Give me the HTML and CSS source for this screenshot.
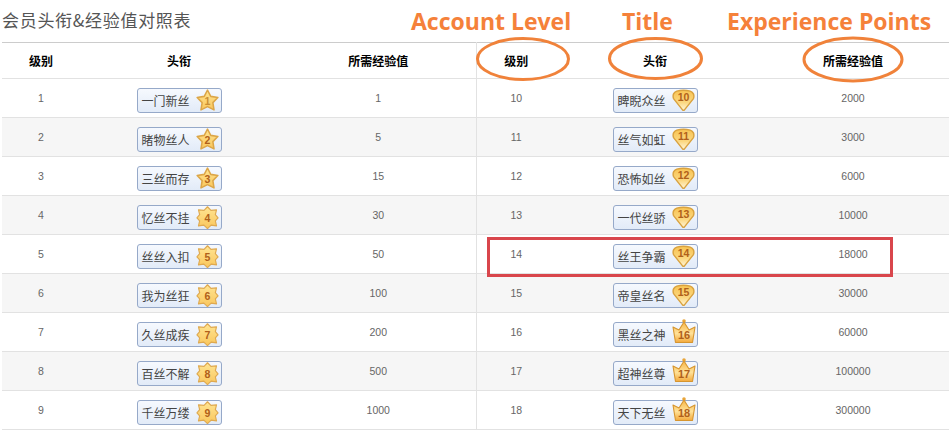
FILE: index.html
```html
<!DOCTYPE html>
<html lang="zh">
<head>
<meta charset="utf-8">
<title>会员头衔&amp;经验值对照表</title>
<link rel="stylesheet" href="styles.css">
</head>
<body>
<svg class="defs" aria-hidden="true">
  <defs>
    <linearGradient id="gold" x1="0" y1="0" x2="0" y2="1">
      <stop offset="0" stop-color="#ffe593"/>
      <stop offset="1" stop-color="#f9c65c"/>
    </linearGradient>
    <linearGradient id="gem" x1="0" y1="0" x2="0" y2="1">
      <stop offset="0" stop-color="#f8c453"/>
      <stop offset="0.6" stop-color="#fbd77f"/>
      <stop offset="1" stop-color="#fff6da"/>
    </linearGradient>
    <linearGradient id="crown" x1="0" y1="0" x2="0" y2="1">
      <stop offset="0" stop-color="#f7b548"/>
      <stop offset="0.55" stop-color="#ffe29a"/>
      <stop offset="1" stop-color="#f3a93c"/>
    </linearGradient>
    <symbol id="star" viewBox="0 0 24 24">
      <path d="M12 1.2 L15.4 7.7 L22.8 8.9 L17.6 14.2 L18.8 21.8 L12 18.4 L5.2 21.8 L6.4 14.2 L1.2 8.9 L8.6 7.7 Z" fill="url(#gold)" stroke="#dca648" stroke-width="1.6" stroke-linejoin="round"/>
    </symbol>
    <symbol id="spike" viewBox="0 0 24 24">
      <path d="M12 0.8 L15.6 4.6 L21.4 4 L20.2 9 L23 12.4 L20.2 15.6 L21.4 20.8 L15.8 20 L12 23.6 L8.2 20 L2.6 20.8 L3.8 15.6 L1 12.4 L3.8 9 L2.6 4 L8.4 4.6 Z" fill="url(#gold)" stroke="#dfa950" stroke-width="1.2" stroke-linejoin="round"/>
    </symbol>
    <symbol id="gem-shape" viewBox="0 0 24 24">
      <path d="M5 2.2 Q12 0.4 19 2.2 C22.2 3.2 23.6 6.4 22.4 10 L13 21.8 Q12 22.8 11 21.8 L1.6 10 C0.4 6.4 1.8 3.2 5 2.2 Z" fill="url(#gem)" stroke="#d9a23f" stroke-width="1.5" stroke-linejoin="round"/>
    </symbol>
    <symbol id="crown-shape" viewBox="0 0 24 25">
      <circle cx="12" cy="2" r="1.8" fill="#e9a63a"/>
      <path d="M1 8 L7 11 L12 3 L17 11 L23 8 L20.5 23.5 L3.5 23.5 Z" fill="url(#crown)" stroke="#d6952f" stroke-width="1.1" stroke-linejoin="round"/>
    </symbol>
  </defs>
</svg>

<h1 class="page-title">会员头衔&amp;经验值对照表</h1>

<table class="levels">
  <colgroup>
    <col class="c-level"><col class="c-title"><col class="c-points">
    <col class="c-level2"><col class="c-title"><col class="c-points">
  </colgroup>
  <thead>
    <tr><th>级别</th><th>头衔</th><th>所需经验值</th><th class="divide">级别</th><th>头衔</th><th>所需经验值</th></tr>
  </thead>
  <tbody>
    <tr>
      <td>1</td>
      <td><span class="tag">一门新丝<svg class="ico" viewBox="0 0 24 24"><use href="#star"/><text class="num n1" x="12" y="17">1</text></svg></span></td>
      <td>1</td>
      <td class="divide">10</td>
      <td><span class="tag">睥睨众丝<svg class="ico" viewBox="0 0 24 24"><use href="#gem-shape"/><text class="num" x="12" y="13">10</text></svg></span></td>
      <td>2000</td>
    </tr>
    <tr>
      <td>2</td>
      <td><span class="tag">睹物丝人<svg class="ico" viewBox="0 0 24 24"><use href="#star"/><text class="num" x="12" y="17">2</text></svg></span></td>
      <td>5</td>
      <td class="divide">11</td>
      <td><span class="tag">丝气如虹<svg class="ico" viewBox="0 0 24 24"><use href="#gem-shape"/><text class="num" x="12" y="13">11</text></svg></span></td>
      <td>3000</td>
    </tr>
    <tr>
      <td>3</td>
      <td><span class="tag">三丝而存<svg class="ico" viewBox="0 0 24 24"><use href="#star"/><text class="num" x="12" y="17">3</text></svg></span></td>
      <td>15</td>
      <td class="divide">12</td>
      <td><span class="tag">恐怖如丝<svg class="ico" viewBox="0 0 24 24"><use href="#gem-shape"/><text class="num" x="12" y="13">12</text></svg></span></td>
      <td>6000</td>
    </tr>
    <tr>
      <td>4</td>
      <td><span class="tag">忆丝不挂<svg class="ico" viewBox="0 0 24 24"><use href="#spike"/><text class="num" x="12" y="16.5">4</text></svg></span></td>
      <td>30</td>
      <td class="divide">13</td>
      <td><span class="tag">一代丝骄<svg class="ico" viewBox="0 0 24 24"><use href="#gem-shape"/><text class="num" x="12" y="13">13</text></svg></span></td>
      <td>10000</td>
    </tr>
    <tr>
      <td>5</td>
      <td><span class="tag">丝丝入扣<svg class="ico" viewBox="0 0 24 24"><use href="#spike"/><text class="num" x="12" y="16.5">5</text></svg></span></td>
      <td>50</td>
      <td class="divide">14</td>
      <td><span class="tag">丝王争霸<svg class="ico" viewBox="0 0 24 24"><use href="#gem-shape"/><text class="num" x="12" y="13">14</text></svg></span></td>
      <td>18000</td>
    </tr>
    <tr>
      <td>6</td>
      <td><span class="tag">我为丝狂<svg class="ico" viewBox="0 0 24 24"><use href="#spike"/><text class="num" x="12" y="16.5">6</text></svg></span></td>
      <td>100</td>
      <td class="divide">15</td>
      <td><span class="tag">帝皇丝名<svg class="ico" viewBox="0 0 24 24"><use href="#gem-shape"/><text class="num" x="12" y="13">15</text></svg></span></td>
      <td>30000</td>
    </tr>
    <tr>
      <td>7</td>
      <td><span class="tag">久丝成疾<svg class="ico" viewBox="0 0 24 24"><use href="#spike"/><text class="num" x="12" y="16.5">7</text></svg></span></td>
      <td>200</td>
      <td class="divide">16</td>
      <td><span class="tag">黑丝之神<svg class="ico-crown" viewBox="0 0 24 25"><use href="#crown-shape"/><text class="num" x="12" y="20">16</text></svg></span></td>
      <td>60000</td>
    </tr>
    <tr>
      <td>8</td>
      <td><span class="tag">百丝不解<svg class="ico" viewBox="0 0 24 24"><use href="#spike"/><text class="num" x="12" y="16.5">8</text></svg></span></td>
      <td>500</td>
      <td class="divide">17</td>
      <td><span class="tag">超神丝尊<svg class="ico-crown" viewBox="0 0 24 25"><use href="#crown-shape"/><text class="num" x="12" y="20">17</text></svg></span></td>
      <td>100000</td>
    </tr>
    <tr>
      <td>9</td>
      <td><span class="tag">千丝万缕<svg class="ico" viewBox="0 0 24 24"><use href="#spike"/><text class="num" x="12" y="16.5">9</text></svg></span></td>
      <td>1000</td>
      <td class="divide">18</td>
      <td><span class="tag">天下无丝<svg class="ico-crown" viewBox="0 0 24 25"><use href="#crown-shape"/><text class="num" x="12" y="20">18</text></svg></span></td>
      <td>300000</td>
    </tr>
  </tbody>
</table>

<span class="note note-level">Account Level</span>
<span class="note note-title">Title</span>
<span class="note note-points">Experience Points</span>

<svg class="marks" viewBox="0 0 949 437" aria-hidden="true">
  <ellipse class="ring" cx="523" cy="59" rx="45.5" ry="20.5"/>
  <ellipse class="ring" cx="655.5" cy="58.5" rx="46" ry="20"/>
  <ellipse class="ring" cx="853" cy="59.5" rx="49" ry="21.5"/>
  <rect class="box" x="488.5" y="238.5" width="403" height="37"/>
</svg>
</body>
</html>
```

FILE: styles.css
```css
html, body {
  margin: 0;
  padding: 0;
  background: #fff;
  overflow: hidden;
}
body {
  position: relative;
  width: 949px;
  height: 437px;
  font-family: "Noto Sans CJK SC", "Liberation Sans", sans-serif;
  color: #333;
}
.defs {
  position: absolute;
  width: 0;
  height: 0;
}
.page-title {
  margin: 0;
  padding-left: 2px;
  height: 42px;
  line-height: 40px;
  font-size: 17px;
  font-weight: 400;
  color: #555;
  letter-spacing: 0.7px;
}
.levels {
  width: 950px;
  margin-left: 2px;
  table-layout: fixed;
  border-collapse: collapse;
  border-top: 1px solid #ccc;
}
.c-level { width: 78px; }
.c-title { width: 198px; }
.c-points { width: 198px; }
.c-level2 { width: 80px; }
.levels th {
  height: 35px;
  padding: 0;
  font-size: 12px;
  font-weight: 700;
  color: #000;
  border-bottom: 1px solid #e2e2e2;
}
.levels td {
  height: 38px;
  padding: 0;
  text-align: center;
  font-family: "Liberation Sans", sans-serif;
  font-size: 10.5px;
  color: #666;
  border-bottom: 1px solid #e2e2e2;
}
.levels th:nth-child(3),
.levels td:nth-child(3) {
  padding-left: 3px;
}
.levels tbody tr:nth-child(even) {
  background: #f6f6f6;
}
.levels .divide {
  border-left: 1px solid #e2e2e2;
}
.tag {
  position: relative;
  display: inline-block;
  box-sizing: border-box;
  width: 85px;
  height: 25px;
  margin-top: 4px;
  padding-left: 4px;
  vertical-align: middle;
  text-align: left;
  font-family: "Noto Sans CJK SC", sans-serif;
  font-size: 12px;
  line-height: 23px;
  color: #444;
  background: linear-gradient(#f6f9fe, #e2ebf8);
  border: 1px solid #96a9c9;
  border-radius: 3px;
}
.ico {
  position: absolute;
  right: 2px;
  top: 0;
  width: 23px;
  height: 23px;
}
.ico-crown {
  position: absolute;
  right: 1px;
  top: -4px;
  width: 24px;
  height: 25px;
}
.num {
  font-family: "Liberation Sans", sans-serif;
  font-size: 11px;
  font-weight: 700;
  fill: #b0601a;
  text-anchor: middle;
}
.n1 {
  fill: #c98f35;
}
.note {
  position: absolute;
  top: 6px;
  font-family: "Open Sans", sans-serif;
  font-size: 23px;
  font-weight: 700;
  line-height: 30px;
  color: #f5813a;
  white-space: nowrap;
}
.note-level { left: 411px; }
.note-title { left: 622px; }
.note-points { left: 727px; }
.marks {
  position: absolute;
  left: 0;
  top: 0;
  width: 949px;
  height: 437px;
  pointer-events: none;
}
.ring {
  fill: none;
  stroke: #f0823a;
  stroke-width: 3;
}
.box {
  fill: none;
  stroke: #d9464c;
  stroke-width: 3;
}
```
